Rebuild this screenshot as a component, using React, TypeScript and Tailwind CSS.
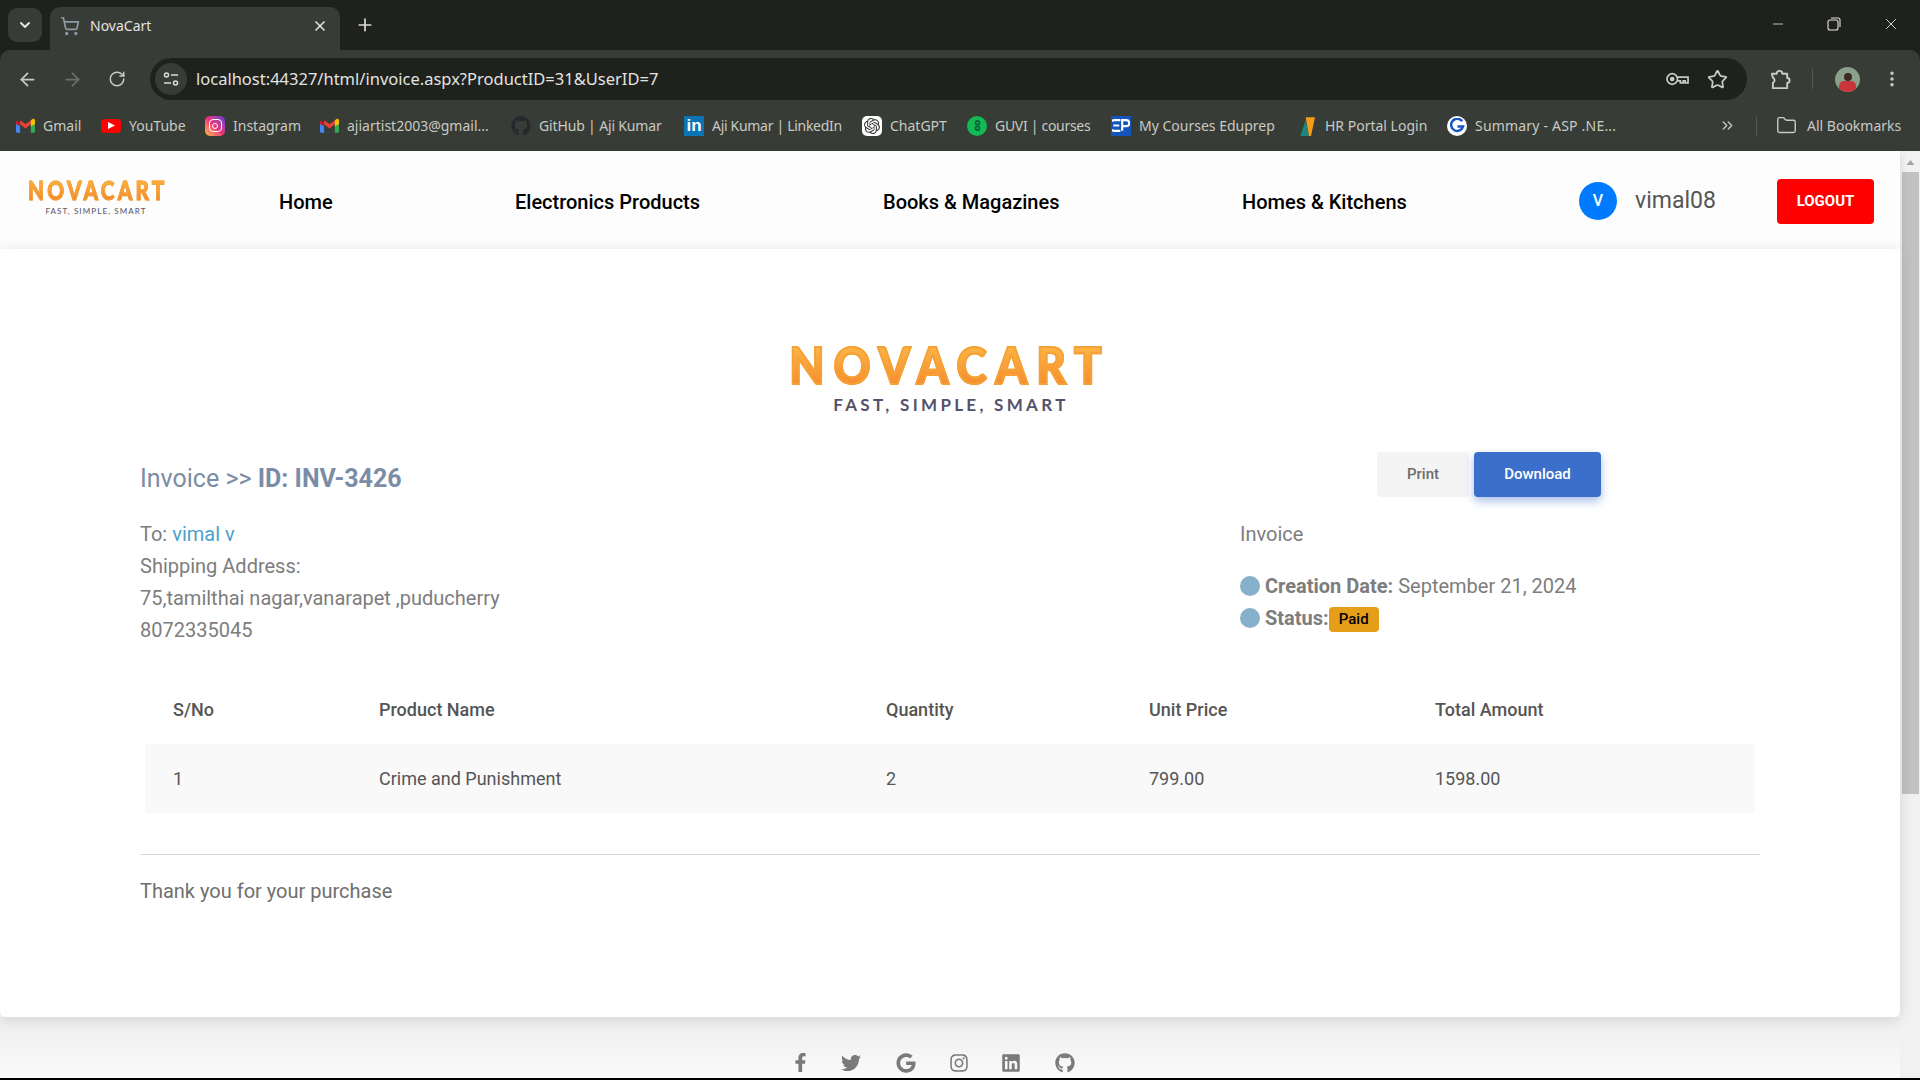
import { ArrowLeft, ArrowRight, ChevronDown, ChevronsRight, Folder, Minus, MoreVertical, Plus, RotateCw, ShoppingCart, Star, X } from 'lucide-react';
import { FaFacebookF, FaGithub, FaGoogle, FaInstagram, FaLinkedin, FaTwitter } from 'react-icons/fa';
import { SiOpenai } from 'react-icons/si';
import type { ReactNode } from 'react';

function GmailIcon() {
  return (
    <svg viewBox="0 0 16 12" className="w-[19px] h-[15px] shrink-0">
      <path d="M0 2v9a1 1 0 0 0 1 1h2.500V5z" fill="#4285f4" />
      <path d="M16 2v9a1 1 0 0 1-1 1h-2.500V5z" fill="#34a853" />
      <path d="M0 1.500 3.500 4v3L0 4.500z" fill="#c5221f" />
      <path d="M3.500 1.500 8 5l4.500-3.500V5L8 8.500 3.500 5z" fill="#ea4335" />
      <path d="M12.500 1.500 14 .5c1-.5 2 0 2 1.500v2.500L12.500 7z" fill="#fbbc04" />
    </svg>
  );
}

function YoutubeIcon() {
  return (
    <span className="w-[20px] h-[14px] bg-[#f00] rounded-[4px] flex items-center justify-center shrink-0">
      <svg viewBox="0 0 6 6" className="w-[7px] h-[7px]">
        <path d="M0 0l6 3-6 3z" fill="#fff" />
      </svg>
    </span>
  );
}

function InstagramIcon() {
  return (
    <span className="w-[20px] h-[20px] rounded-[5px] bg-gradient-to-tr from-[#fdb52a] via-[#ee2a7b] to-[#6228d7] flex items-center justify-center shrink-0">
      <span className="w-[13px] h-[13px] rounded-[4px] border-[1.500px] border-white flex items-center justify-center">
        <span className="w-[6px] h-[6px] rounded-full border-[1.500px] border-white" />
      </span>
    </span>
  );
}

function LinkedinIcon() {
  return (
    <span className="w-[20px] h-[20px] bg-[#0a74b5] flex items-center justify-center shrink-0 text-white text-[17px] font-bold leading-none font-['Liberation_Sans',sans-serif]">
      in
    </span>
  );
}

function GuviIcon() {
  return (
    <span className="w-[20px] h-[20px] rounded-full bg-[#12b954] flex items-center justify-center shrink-0">
      <svg viewBox="0 0 8 12" className="w-[9px] h-[13px]" fill="none" stroke="#063" strokeWidth="1.600">
        <circle cx="4" cy="3.500" r="1.800" />
        <circle cx="4" cy="8.500" r="1.800" />
      </svg>
    </span>
  );
}

function EduprepIcon() {
  return (
    <span className="w-[20px] h-[20px] bg-[#1354bd] flex items-center justify-center shrink-0">
      <svg viewBox="0 0 15 11" className="w-[18px] h-[13px]" fill="none" stroke="#fff" strokeWidth="1.800">
        <path d="M7 1H2a1 1 0 0 0 0 9h5M1 5.500h5M8.500 10V1H12a2.300 2.300 0 0 1 0 5H8.500" />
      </svg>
    </span>
  );
}

function HrIcon() {
  return (
    <svg viewBox="0 0 14 15" className="w-[20px] h-[20px] shrink-0">
      <path d="M2 15 6 3l2.500 12z" fill="#18897f" />
      <path d="M6 1h7l-3 14H8.500z" fill="#f59c1a" />
    </svg>
  );
}

function SummaryIcon() {
  return (
    <span className="w-[20px] h-[20px] rounded-full bg-white flex items-center justify-center shrink-0">
      <svg viewBox="0 0 16 16" className="w-[15px] h-[15px]" fill="none" stroke="#1a55c4" strokeWidth="2.600">
        <path d="M13 3.500A6.500 6.500 0 1 0 14 9H8" />
      </svg>
    </span>
  );
}

function TuneIcon() {
  return (
    <svg viewBox="0 0 16 16" className="w-[16px] h-[16px]" fill="none" stroke="#dcdcd9" strokeWidth="1.500">
      <circle cx="3.500" cy="4" r="2" />
      <path d="M8 4h7M1 12h7" />
      <circle cx="12.500" cy="12" r="2" />
    </svg>
  );
}

function KeyIcon() {
  return (
    <svg viewBox="0 0 24 14" className="w-[23px] h-[14px]" fill="none" stroke="#c8cac4" strokeWidth="1.800">
      <circle cx="6.500" cy="7" r="5.500" />
      <circle cx="6.500" cy="7" r="1.500" fill="#c8cac4" />
      <path d="M12 5h11v6h-3V9h-2v2h-3V9h-3" />
    </svg>
  );
}

function ExtensionIcon() {
  return (
    <svg viewBox="0 0 22 22" className="w-[21px] h-[21px]" fill="none" stroke="#c8cac4" strokeWidth="2" strokeLinejoin="round">
      <path d="M2 5h5a3 3 0 0 1 6 0h5v4.500a2.500 2.500 0 0 1 0 5V20H3v-5.500a3 3 0 0 0 0-5.500z" />
    </svg>
  );
}

const bookmarks: { icon: ReactNode; label: string; width: string }[] = [
  { icon: <GmailIcon />, label: 'Gmail', width: 'w-[38px]' },
  { icon: <YoutubeIcon />, label: 'YouTube', width: 'w-[56px]' },
  { icon: <InstagramIcon />, label: 'Instagram', width: 'w-[67px]' },
  { icon: <GmailIcon />, label: 'ajiartist2003@gmail...', width: 'w-[144px]' },
  { icon: <FaGithub className="w-[20px] h-[20px] text-[#24292e] shrink-0" />, label: 'GitHub | Aji Kumar', width: 'w-[125px] tracking-[-0.15px]' },
  { icon: <LinkedinIcon />, label: 'Aji Kumar | LinkedIn', width: 'w-[130px] tracking-[-0.3px]' },
  {
    icon: (
      <span className="w-[20px] h-[20px] rounded-[5px] bg-white flex items-center justify-center shrink-0">
        <SiOpenai className="w-[16px] h-[16px] text-[#333]" />
      </span>
    ),
    label: 'ChatGPT',
    width: 'w-[57px]',
  },
  { icon: <GuviIcon />, label: 'GUVI | courses', width: 'w-[96px] tracking-[-0.3px]' },
  { icon: <EduprepIcon />, label: 'My Courses Eduprep', width: 'w-[138px]' },
  { icon: <HrIcon />, label: 'HR Portal Login', width: 'w-[102px]' },
  { icon: <SummaryIcon />, label: 'Summary - ASP .NE...', width: 'w-[140px] tracking-[0.2px]' },
];

function BrowserChrome() {
  return (
    <div className="shrink-0 bg-[#1e211c] text-[#c8cac4] font-['Noto_Sans',sans-serif]">
      <div className="h-[50px] flex pl-[8px]">
        <div className="w-[34px] h-[34px] mt-[8px] rounded-[9px] bg-[#383c36] flex items-center justify-center">
          <ChevronDown className="w-[16px] h-[16px] text-[#e3e3e0]" strokeWidth={3} />
        </div>
        <div className="w-[290px] h-[43px] mt-[7px] ml-[8px] rounded-t-[10px] bg-[#383c36] flex items-center pb-[6px] pl-[10px] pr-[12px]">
          <ShoppingCart className="w-[20px] h-[20px] text-[#8d9aa8]" />
          <span className="ml-[10px] text-[14px] text-[#e3e3e0]">NovaCart</span>
          <X className="ml-auto w-[16px] h-[16px] text-[#e3e3e0]" strokeWidth={2.500} />
        </div>
        <div className="ml-[15px] mt-[15px] h-[20px]">
          <Plus className="w-[20px] h-[20px] text-[#dcdcd9]" strokeWidth={2} />
        </div>
        <div className="ml-auto flex items-start pt-[16px] pr-[20px] gap-[41px] text-[#e6e6e6]">
          <Minus className="w-[16px] h-[16px]" strokeWidth={1.200} />
          <svg viewBox="0 0 14 14" className="w-[14px] h-[14px] mt-[1px]" fill="none" stroke="currentColor" strokeWidth="1.100">
            <rect x="1" y="3" width="10" height="10" rx="2" />
            <path d="M4 1h7a2 2 0 0 1 2 2v7" />
          </svg>
          <X className="w-[18px] h-[18px] -mt-[1px]" strokeWidth={1.200} />
        </div>
      </div>
      <div className="bg-[#383c36] rounded-t-[10px]">
        <div className="h-[50px] pt-[8px] flex items-center pl-[17px]">
          <ArrowLeft className="w-[21px] h-[21px] text-[#c8cac4]" strokeWidth={2} />
          <ArrowRight className="w-[21px] h-[21px] ml-[24px] text-[#6d706a]" strokeWidth={2} />
          <RotateCw className="w-[18px] h-[18px] ml-[25px] text-[#c8cac4]" strokeWidth={2} />
          <div className="ml-[24px] w-[1597px] h-[42px] rounded-full bg-[#1e211c] flex items-center pl-[5px] pr-[19px]">
            <span className="w-[32px] h-[32px] rounded-full bg-[#383c36] flex items-center justify-center">
              <TuneIcon />
            </span>
            <span className="ml-[9px] text-[16.500px] text-[#e3e3e0]">localhost:44327/html/invoice.aspx?ProductID=31&amp;UserID=7</span>
            <span className="ml-auto">
              <KeyIcon />
            </span>
            <Star className="ml-[18px] w-[21px] h-[21px] text-[#c8cac4]" strokeWidth={2} />
          </div>
          <span className="ml-[23px]">
            <ExtensionIcon />
          </span>
          <span className="ml-[21px] w-px h-[20px] bg-[#555852]" />
          <span className="ml-[22px] w-[25px] h-[25px] rounded-full bg-[#8aa08c] overflow-hidden flex flex-col items-center justify-end">
            <span className="w-[8px] h-[8px] rounded-full bg-[#3a2a22]" />
            <span className="w-[17px] h-[11px] rounded-t-[5px] bg-[#c9363a]" />
          </span>
          <MoreVertical className="ml-[22px] w-[20px] h-[20px] text-[#c8cac4]" strokeWidth={2.200} />
        </div>
        <div className="h-[51px] pl-[16px] flex items-center text-[14px] text-[#c8cac4]">
          <div className="flex items-center gap-[20px]">
            {bookmarks.map((b) => (
              <div key={b.label} className="flex items-center gap-[8px]">
                {b.icon}
                <span className={`${b.width} whitespace-nowrap`}>{b.label}</span>
              </div>
            ))}
          </div>
          <ChevronsRight className="ml-[104px] w-[17px] h-[17px]" strokeWidth={1.800} />
          <span className="ml-[20px] w-px h-[20px] bg-[#555852]" />
          <Folder className="ml-[19px] w-[21px] h-[21px]" strokeWidth={1.600} />
          <span className="ml-[10px] whitespace-nowrap">All Bookmarks</span>
        </div>
      </div>
    </div>
  );
}

function Navbar() {
  return (
    <div className="relative h-[98px] bg-[#fdfdfd] shadow-[0_2px_8px_rgba(0,0,0,0.12)] flex items-center pt-[2px] pl-[27px] font-medium text-[20px] text-black">
      <div className="w-[138px] -mt-[8px] flex flex-col items-center font-['Lato',sans-serif]">
        <span className="pl-[4px] text-[26px] leading-[24px] font-black tracking-[4px] scale-x-[0.8] [-webkit-text-stroke:0.8px_#f5a136] bg-gradient-to-b from-[#fab63f] to-[#f0852c] bg-clip-text text-transparent">NOVACART</span>
        <span className="mt-[3px] text-[8px] leading-[12px] font-medium tracking-[1.100px] text-[#5f5c70]">FAST, SIMPLE, SMART</span>
      </div>
      <span className="ml-[114px] w-[236px] pt-[2px]">Home</span>
      <span className="w-[368px] pt-[2px]">Electronics Products</span>
      <span className="w-[359px] pt-[2px]">Books &amp; Magazines</span>
      <span className="w-[337px] pt-[2px]">Homes &amp; Kitchens</span>
      <span className="w-[38px] h-[38px] rounded-full bg-[#007bff] text-white text-[16px] font-medium flex items-center justify-center">V</span>
      <span className="ml-[18px] w-[142px] text-[23px] font-normal text-[#555]">vimal08</span>
      <button className="w-[97px] h-[45px] rounded-[4px] bg-[#f00] text-white text-[15px] font-bold">LOGOUT</button>
    </div>
  );
}

function InvoiceCard() {
  return (
    <div className="relative bg-white h-[768px] shadow-[0_2px_14px_rgba(0,0,0,0.12)] rounded-b-[6px] pl-[140px] pr-[140px] pt-[87px] text-[#7d7d7d] text-[20px]">
      <div className="flex flex-col items-center -ml-[10px] font-['Lato',sans-serif]">
        <span className="pl-[10px] text-[52px] leading-[56px] font-black tracking-[10px] scale-x-[0.88] [-webkit-text-stroke:2px_#f5a136] bg-gradient-to-b from-[#fdc04c] to-[#f4842a] bg-clip-text text-transparent">NOVACART</span>
        <span className="mt-[2px] pl-[12px] text-[17px] leading-[22px] font-bold tracking-[3.300px] text-[#54526a]">FAST, SIMPLE, SMART</span>
      </div>

      <div className="mt-[36px] w-[1461px] flex justify-between items-start">
        <h2 className="mt-[9px] text-[25px] leading-[36px] text-[#7a8ca6]">
          Invoice &gt;&gt; <b className="font-bold">ID: INV-3426</b>
        </h2>
        <div className="flex gap-[5px] text-[15px] font-medium">
          <button className="w-[92px] h-[45px] rounded-[4px] bg-[#f4f4f4] text-[#6c6c6c]">Print</button>
          <button className="w-[127px] h-[45px] rounded-[4px] bg-[#3c6fcb] text-white shadow-[0_4px_10px_rgba(60,111,203,0.45)]">Download</button>
        </div>
      </div>

      <div className="mt-[21px] flex h-[128px] leading-[32px]">
        <div className="w-[1100px]">
          <p>
            To: <span className="text-[#4d9fcd]">vimal v</span>
          </p>
          <p>Shipping Address:</p>
          <p>75,tamilthai nagar,vanarapet ,puducherry</p>
          <p>8072335045</p>
        </div>
        <div>
          <p>Invoice</p>
          <p className="mt-[20px] flex items-center">
            <span className="w-[20px] h-[20px] rounded-full bg-[#87b0cb] mr-[5px]" />
            <b className="font-bold mr-[5px]">Creation Date:</b> September 21, 2024
          </p>
          <p className="flex items-center">
            <span className="w-[20px] h-[20px] rounded-full bg-[#87b0cb] mr-[5px]" />
            <b className="font-bold">Status:</b>
            <span className="mt-[3px] w-[50px] h-[25px] rounded-[4px] bg-[#e49e1a] text-black text-[15px] leading-[25px] font-medium text-center">Paid</span>
          </p>
        </div>
      </div>

      <div className="mt-[29px] ml-[5px] w-[1610px] text-[18px] text-[#555]">
        <div className="grid grid-cols-[206px_507px_263px_286px_1fr] pl-[28px] h-[69px] items-center font-medium">
          <span>S/No</span>
          <span>Product Name</span>
          <span>Quantity</span>
          <span>Unit Price</span>
          <span>Total Amount</span>
        </div>
        <div className="grid grid-cols-[206px_507px_263px_286px_1fr] pl-[28px] h-[69px] items-center bg-[#f9f9f9]">
          <span>1</span>
          <span>Crime and Punishment</span>
          <span>2</span>
          <span>799.00</span>
          <span>1598.00</span>
        </div>
      </div>

      <div className="mt-[41px] w-[1620px] border-t border-[#d8d8d8]" />
      <p className="mt-[21px] leading-[30px] text-[#6f6f6f]">Thank you for your purchase</p>
    </div>
  );
}

function Footer() {
  return (
    <div className="flex-1 bg-gradient-to-b from-[#eeeeee] to-[#fafafa] pt-[36px] pl-[791px] flex items-start text-[#7a7a7a]">
      <FaFacebookF className="w-[19px] h-[19px]" />
      <FaTwitter className="ml-[31px] w-[20px] h-[20px]" />
      <FaGoogle className="ml-[35px] w-[20px] h-[20px]" />
      <FaInstagram className="ml-[33px] w-[20px] h-[20px]" />
      <FaLinkedin className="ml-[32px] w-[20px] h-[20px]" />
      <FaGithub className="ml-[34px] w-[20px] h-[20px]" />
    </div>
  );
}

function Scrollbar() {
  return (
    <div className="w-[20px] shrink-0 bg-[#f1f1f1] flex flex-col items-center">
      <svg viewBox="0 0 8 5" className="w-[9px] h-[5px] mt-[9px]">
        <path d="M4 0l4 5H0z" fill="#a3a3a3" />
      </svg>
      <div className="mt-[7px] w-[17px] h-[622px] bg-[#c1c1c1]" />
    </div>
  );
}

export default function App() {
  return (
    <div className="w-screen h-screen overflow-hidden bg-black flex flex-col font-['Roboto',sans-serif]">
      <BrowserChrome />
      <div className="h-[927px] flex shrink-0">
        <div className="flex-1 min-w-0 flex flex-col bg-[#fafafa]">
          <Navbar />
          <InvoiceCard />
          <Footer />
        </div>
        <Scrollbar />
      </div>
    </div>
  );
}
